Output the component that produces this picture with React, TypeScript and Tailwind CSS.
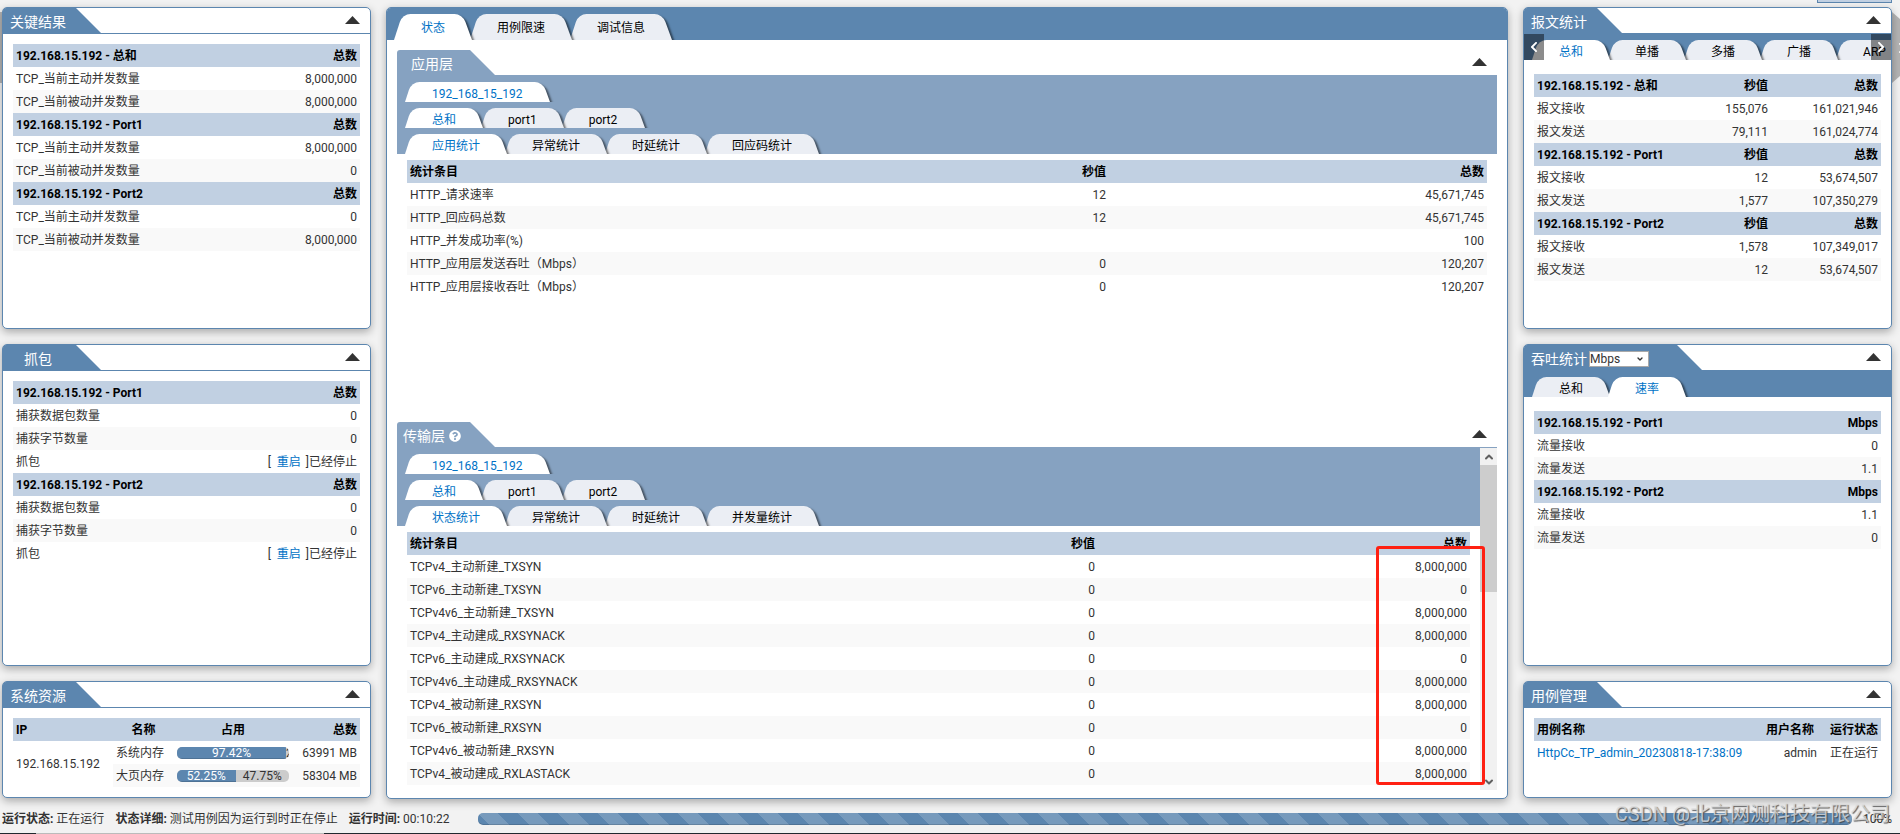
import React, { useState } from 'react';
import clsx from 'clsx';
import { FaChevronLeft, FaChevronRight, FaQuestionCircle } from 'react-icons/fa';
import { ChevronDown, ChevronUp } from 'lucide-react';

type Group = { head: string[]; rows: React.ReactNode[][] };

const restart = (
  <>
    [ <a href="#restart" className="mr-[2px] ml-[3px] text-[#0072c6]">重启</a> ]已经停止
  </>
);

const keyResults: Group[] = [
  { head: ['192.168.15.192 - 总和', '总数'], rows: [['TCP_当前主动并发数量', '8,000,000'], ['TCP_当前被动并发数量', '8,000,000']] },
  { head: ['192.168.15.192 - Port1', '总数'], rows: [['TCP_当前主动并发数量', '8,000,000'], ['TCP_当前被动并发数量', '0']] },
  { head: ['192.168.15.192 - Port2', '总数'], rows: [['TCP_当前主动并发数量', '0'], ['TCP_当前被动并发数量', '8,000,000']] },
];

const captures: Group[] = [
  { head: ['192.168.15.192 - Port1', '总数'], rows: [['捕获数据包数量', '0'], ['捕获字节数量', '0'], ['抓包', restart]] },
  { head: ['192.168.15.192 - Port2', '总数'], rows: [['捕获数据包数量', '0'], ['捕获字节数量', '0'], ['抓包', restart]] },
];

const packets: Group[] = [
  { head: ['192.168.15.192 - 总和', '秒值', '总数'], rows: [['报文接收', '155,076', '161,021,946'], ['报文发送', '79,111', '161,024,774']] },
  { head: ['192.168.15.192 - Port1', '秒值', '总数'], rows: [['报文接收', '12', '53,674,507'], ['报文发送', '1,577', '107,350,279']] },
  { head: ['192.168.15.192 - Port2', '秒值', '总数'], rows: [['报文接收', '1,578', '107,349,017'], ['报文发送', '12', '53,674,507']] },
];

const throughput: Group[] = [
  { head: ['192.168.15.192 - Port1', 'Mbps'], rows: [['流量接收', '0'], ['流量发送', '1.1']] },
  { head: ['192.168.15.192 - Port2', 'Mbps'], rows: [['流量接收', '1.1'], ['流量发送', '0']] },
];

const appStats: Group[] = [
  {
    head: ['统计条目', '秒值', '总数'],
    rows: [
      ['HTTP_请求速率', '12', '45,671,745'],
      ['HTTP_回应码总数', '12', '45,671,745'],
      ['HTTP_并发成功率(%)', '', '100'],
      ['HTTP_应用层发送吞吐（Mbps）', '0', '120,207'],
      ['HTTP_应用层接收吞吐（Mbps）', '0', '120,207'],
    ],
  },
];

const tcpStats: Group[] = [
  {
    head: ['统计条目', '秒值', '总数'],
    rows: [
      ['TCPv4_主动新建_TXSYN', '0', '8,000,000'],
      ['TCPv6_主动新建_TXSYN', '0', '0'],
      ['TCPv4v6_主动新建_TXSYN', '0', '8,000,000'],
      ['TCPv4_主动建成_RXSYNACK', '0', '8,000,000'],
      ['TCPv6_主动建成_RXSYNACK', '0', '0'],
      ['TCPv4v6_主动建成_RXSYNACK', '0', '8,000,000'],
      ['TCPv4_被动新建_RXSYN', '0', '8,000,000'],
      ['TCPv6_被动新建_RXSYN', '0', '0'],
      ['TCPv4v6_被动新建_RXSYN', '0', '8,000,000'],
      ['TCPv4_被动建成_RXLASTACK', '0', '8,000,000'],
    ],
  },
];

const StatTable = ({ groups, cols }: { groups: Group[]; cols?: string[] }) => (
  <table className="w-full table-fixed border-collapse">
    {cols && (
      <colgroup>
        {cols.map((c, i) => (
          <col key={i} className={c} />
        ))}
      </colgroup>
    )}
    {groups.map((group) => (
      <tbody key={group.head[0]}>
        <tr className="h-[23px] bg-[#c1d0e2] text-black">
          {group.head.map((cell, i) => (
            <th key={i} className={clsx('px-[3px] font-bold', i === 0 ? 'text-left' : 'text-right')}>{cell}</th>
          ))}
        </tr>
        {group.rows.map((row, r) => (
          <tr key={r} className={clsx('h-[23px]', r % 2 === 1 && 'bg-[#f9f9f9]')}>
            {row.map((cell, i) => (
              <td key={i} className={clsx('px-[3px]', i === 0 ? 'text-left' : 'text-right')}>{cell}</td>
            ))}
          </tr>
        ))}
      </tbody>
    ))}
  </table>
);

const Tabs = ({ items, initial = 0, large = false }: { items: string[]; initial?: number; large?: boolean }) => {
  const [active, setActive] = useState(initial);

  return (
    <div className="isolate flex overflow-hidden">
      {items.map((item, i) => (
        <button
          key={item}
          onClick={() => setActive(i)}
          style={{ zIndex: active === i ? 20 : items.length - i }}
          className={clsx(
            'relative -mr-[2px] shrink-0 px-[27px] whitespace-nowrap',
            "before:absolute before:inset-y-0 before:left-0 before:w-3/5 before:origin-bottom-left before:-skew-x-[18deg] before:rounded-tl-lg before:content-['']",
            "after:absolute after:inset-y-0 after:right-0 after:-z-10 after:w-3/5 after:origin-bottom-right after:skew-x-[20deg] after:rounded-tr-lg after:shadow-[2px_2px_2px_rgba(0,0,0,0.5)] after:content-['']",
            large ? 'h-[26px] pt-px' : 'h-5 pt-[3px]',
            active === i
              ? 'text-[#0072c6] before:bg-white after:bg-white'
              : 'text-black before:bg-[#ebeef4] after:bg-[#ebeef4]',
          )}
        >
          <span className="relative z-10">{item}</span>
        </button>
      ))}
    </div>
  );
};

const Collapse = () => (
  <button aria-label="收起" className="mr-[10px] pb-px">
    <svg width="15" height="8" viewBox="0 0 15 8" fill="#333">
      <path d="M7.5 0L15 8H0z" />
    </svg>
  </button>
);

const titleShape = '[clip-path:polygon(0_0,calc(100%_-_25px)_0,100%_100%,0_100%)]';

type PanelProps = {
  title: string;
  extra?: React.ReactNode;
  tabs?: React.ReactNode;
  short?: boolean;
  children: React.ReactNode;
};

const Panel = ({ title, extra, tabs, short, children }: PanelProps) => (
  <section
    className={clsx(
      'relative rounded-[5px] border border-[#5c86af] bg-white shadow-[0_3px_8px_rgba(0,0,0,0.3)]',
      short ? 'min-h-[117px]' : 'min-h-[322px]',
    )}
  >
    <header className={clsx('flex h-[25px] items-center justify-between', !tabs && 'box-content border-b border-[#5c86af]')}>
      <div
        className={clsx(
          'flex h-full items-center rounded-tl-[3px] bg-[#5c86af] pt-[2px] text-sm leading-5 text-white',
          titleShape,
          extra ? 'w-[178px] gap-[2px] pl-[7px]' : 'w-[98px] justify-center pr-7',
        )}
      >
        <h2>{title}</h2>
        {extra}
      </div>
      <Collapse />
    </header>
    {tabs && <div className="relative overflow-hidden bg-[#5c86af] pt-[7px] pl-2">{tabs}</div>}
    <div className={clsx('px-[10px]', tabs ? 'pt-[14px]' : 'pt-[10px]')}>{children}</div>
  </section>
);

const Layer = ({ title, help, children }: { title: string; help?: boolean; children: React.ReactNode }) => (
  <section className="relative">
    <header className="flex h-[25px] items-center justify-between">
      <div className={clsx('flex h-full w-[98px] items-center justify-center gap-1 rounded-tl-[3px] bg-[#86a2c1] pt-[2px] pr-7 text-sm leading-5 text-white', titleShape)}>
        <h2 className="whitespace-nowrap">{title}</h2>
        {help && <FaQuestionCircle className="size-3 shrink-0" />}
      </div>
      <Collapse />
    </header>
    <div className="flex border-t border-[#86a2c1]">{children}</div>
  </section>
);

const LayerBody = ({ tabs, groups }: { tabs: string[]; groups: Group[] }) => (
  <div className="min-w-0 flex-1">
    <div className="flex flex-col gap-[6px] overflow-hidden bg-[#86a2c1] pt-[6px] pl-2">
      <Tabs items={['192_168_15_192']} />
      <Tabs items={['总和', 'port1', 'port2']} />
      <Tabs items={tabs} />
    </div>
    <div className="px-[10px] pt-[6px]">
      <StatTable groups={groups} cols={['w-[45%]', 'w-[20%]', 'w-[35%]']} />
    </div>
  </div>
);

const UsageBar = ({ used }: { used: number }) => (
  <div className="flex h-3 overflow-hidden rounded-[5px] bg-[#ccc] text-center leading-3">
    <div className="shrink-0 bg-[#5c86af] text-white shadow-[inset_0_-1px_0_rgba(0,0,0,0.15)]" style={{ width: `${used}%` }}>
      {used}%
    </div>
    <div className="min-w-0 flex-1 overflow-hidden">{(100 - used).toFixed(2)}%</div>
  </div>
);

const App = () => {
  return (
    <div className="relative flex min-h-screen flex-col overflow-hidden bg-[#f2f2f2] font-['Roboto','Noto_Sans_CJK_SC',sans-serif] text-xs leading-4 text-[#333]">
      {/* Edges of the page slider behind the panels */}
      <div className="absolute top-3 left-0 h-[71px] w-1 bg-[#b3b3b3]" />
      <button aria-label="下一页" className="absolute top-3 right-0 flex h-[71px] w-2 items-center overflow-hidden bg-[#b3b3b3] text-white [clip-path:polygon(0_0,100%_10%,100%_90%,0_100%)]">
        <FaChevronRight className="ml-1 size-3 shrink-0" />
      </button>
      <div className="absolute top-0 right-2 h-[3px] w-[75px] border border-t-0 border-[#5c86af] bg-[#c1d0e2]" />

      <main className="grid grid-cols-[369px_minmax(0,1fr)_369px] gap-[15px] pt-[7px] pr-2 pl-[2px]">
        {/* Left column */}
        <div className="flex flex-col gap-[15px]">
          <Panel title="关键结果">
            <StatTable groups={keyResults} />
          </Panel>
          <Panel title="抓包">
            <StatTable groups={captures} />
          </Panel>
          <Panel title="系统资源" short>
            <table className="w-full table-fixed border-collapse">
              <colgroup>
                <col className="w-[100px]" />
                <col className="w-[61px]" />
                <col />
                <col className="w-[68px]" />
              </colgroup>
              <thead>
                <tr className="h-[23px] bg-[#c1d0e2] text-black">
                  <th className="px-[3px] text-left">IP</th>
                  <th className="px-[3px] text-center">名称</th>
                  <th className="px-[3px] text-center">占用</th>
                  <th className="px-[3px] text-right">总数</th>
                </tr>
              </thead>
              <tbody>
                <tr className="h-[23px]">
                  <td rowSpan={2} className="px-[3px]">192.168.15.192</td>
                  <td className="px-[3px]">系统内存</td>
                  <td className="px-[3px]"><UsageBar used={97.42} /></td>
                  <td className="px-[3px] text-right">63991 MB</td>
                </tr>
                <tr className="h-[23px]">
                  <td className="bg-[#f9f9f9] px-[3px]">大页内存</td>
                  <td className="bg-[#f9f9f9] px-[3px]"><UsageBar used={52.25} /></td>
                  <td className="bg-[#f9f9f9] px-[3px] text-right">58304 MB</td>
                </tr>
              </tbody>
            </table>
          </Panel>
        </div>

        {/* Center */}
        <div className="overflow-hidden rounded-[5px] border border-[#5c86af] bg-white shadow-[0_3px_8px_rgba(0,0,0,0.3)]">
          <div className="overflow-hidden bg-[#5c86af] pt-[6px] pl-[7px]">
            <Tabs large items={['状态', '用例限速', '调试信息']} />
          </div>
          <div className="px-[10px] pt-[10px] pb-2">
            <div className="min-h-[372px]">
              <Layer title="应用层">
                <LayerBody tabs={['应用统计', '异常统计', '时延统计', '回应码统计']} groups={appStats} />
              </Layer>
            </div>
            <Layer title="传输层" help>
              <LayerBody tabs={['状态统计', '异常统计', '时延统计', '并发量统计']} groups={tcpStats} />
              <div className="flex min-h-[342px] w-[17px] flex-col bg-[#f1f1f1] text-[#606060]">
                <button aria-label="向上滚动" className="flex h-[17px] items-center justify-center">
                  <ChevronUp className="size-3" strokeWidth={4} />
                </button>
                <div className="h-[127px] bg-[#cdcdcd]" />
                <button aria-label="向下滚动" className="mt-auto flex h-[17px] items-center justify-center">
                  <ChevronDown className="size-3" strokeWidth={4} />
                </button>
              </div>
              {/* Highlight around the totals */}
              <div className="pointer-events-none absolute top-[124px] right-3 h-[239px] w-[109px] rounded-[3px] border-3 border-[#ff2012]" />
            </Layer>
          </div>
        </div>

        {/* Right column */}
        <div className="flex flex-col gap-[15px]">
          <Panel
            title="报文统计"
            tabs={
              <>
                <Tabs items={['总和', '单播', '多播', '广播', 'ARP']} />
                <button aria-label="上一个" className="absolute top-px bottom-0 left-0 z-30 flex w-5 items-center justify-center bg-black/45 text-white">
                  <FaChevronLeft className="size-3" />
                </button>
                <button aria-label="下一个" className="absolute top-px right-0 bottom-0 z-30 flex w-5 items-center justify-center bg-black/45 text-white">
                  <FaChevronRight className="size-3" />
                </button>
              </>
            }
          >
            <StatTable groups={packets} cols={['w-[140px]', 'w-[97px]', 'w-[110px]']} />
          </Panel>
          <Panel
            title="吞吐统计"
            extra={
              <div className="relative h-4 w-[60px] text-xs">
                <select aria-label="吞吐单位" className="block h-4 w-full appearance-none border border-[#a9a9a9] bg-white leading-[14px] text-[#333]">
                  <option>Mbps</option>
                  <option>Kbps</option>
                </select>
                <ChevronDown className="pointer-events-none absolute top-1 right-[5px] size-2 text-[#333]" strokeWidth={4} />
              </div>
            }
            tabs={<Tabs items={['总和', '速率']} initial={1} />}
          >
            <StatTable groups={throughput} />
          </Panel>
          <Panel title="用例管理" short>
            <table className="w-full table-fixed border-collapse">
              <colgroup>
                <col />
                <col className="w-[60px]" />
                <col className="w-[61px]" />
              </colgroup>
              <thead>
                <tr className="h-[23px] bg-[#c1d0e2] text-black">
                  <th className="px-[3px] text-left">用例名称</th>
                  <th className="px-[3px] text-center">用户名称</th>
                  <th className="px-[3px] text-right">运行状态</th>
                </tr>
              </thead>
              <tbody>
                <tr className="h-[23px]">
                  <td className="px-[3px]">
                    <a href="#case" className="text-[#0072c6]">HttpCc_TP_admin_20230818-17:38:09</a>
                  </td>
                  <td className="px-[3px] text-right">admin</td>
                  <td className="px-[3px] text-right">正在运行</td>
                </tr>
              </tbody>
            </table>
          </Panel>
        </div>
      </main>

      {/* Status bar */}
      <footer className="relative mt-[9px] flex h-[22px] items-center gap-[11px] pr-2 pl-[2px] whitespace-nowrap">
        <span><b>运行状态:</b> 正在运行</span>
        <span><b>状态详细:</b> 测试用例因为运行到时正在停止</span>
        <span><b>运行时间:</b> 00:10:22</span>
        <div className="ml-[18px] h-3 flex-1 rounded-[5px] bg-[#5c86af] bg-[linear-gradient(45deg,rgba(255,255,255,0.17)_25%,transparent_25%,transparent_50%,rgba(255,255,255,0.17)_50%,rgba(255,255,255,0.17)_75%,transparent_75%)] bg-size-[40px_40px] shadow-[inset_0_-1px_0_rgba(0,0,0,0.15)]" />
        <span>100%</span>
        <div className="pointer-events-none absolute top-0 right-[10px] text-xl leading-3 text-[#dcdcdc]/80 [text-shadow:1px_1px_1px_rgba(60,60,60,0.8)]">
          CSDN @北京网测科技有限公司
        </div>
      </footer>

      {/* Top edge of the taskbar */}
      <div className="mt-auto flex h-px bg-[#20282e]">
        <div className="ml-9 w-72 bg-[#bbb]" />
      </div>
    </div>
  );
};

export default App;
